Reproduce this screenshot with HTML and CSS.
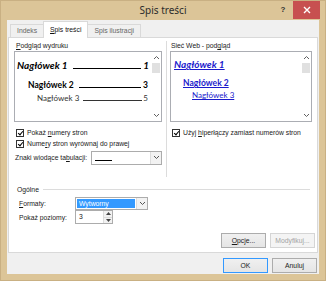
FILE: index.html
```html
<!DOCTYPE html>
<html lang="pl">
<head>
<meta charset="utf-8">
<title>Spis treści</title>
<link rel="stylesheet" href="styles.css">
</head>
<body>
<div class="window">
  <div class="titlebar">
    <div></div>
    <div class="title">Spis treści</div>
    <div class="controls">
      <div class="help">?</div>
      <div class="close">
        <svg width="8" height="8" viewBox="0 0 8 8"><path d="M1 1L7 7M7 1L1 7" stroke="#fff" stroke-width="1.4"/></svg>
      </div>
    </div>
  </div>
  <div class="client">
    <div class="tabs">
      <div class="tab">Indeks</div>
      <div class="tab active"><u>S</u>pis treści</div>
      <div class="tab">Spis ilustracji</div>
    </div>
    <div class="panel">
      <div class="top">
        <div class="col col-left">
          <div class="label"><u>P</u>odgląd wydruku</div>
          <div class="box">
            <div class="box-content print">
              <div class="entry h1"><span>Nagłówek 1</span><span class="leader"></span><span>1</span></div>
              <div class="entry h2"><span>Nagłówek 2</span><span class="leader"></span><span>3</span></div>
              <div class="entry h3"><span>Nagłówek 3</span><span class="leader"></span><span>5</span></div>
            </div>
            <div class="scrollbar">
              <svg class="arrow" width="7" height="5" viewBox="0 0 7 5"><path d="M1 4L3.5 1.5L6 4" fill="none" stroke="#606060" stroke-width="1"/></svg>
              <div class="thumb"></div>
              <div class="track"></div>
              <svg class="arrow" width="7" height="5" viewBox="0 0 7 5"><path d="M1 1L3.5 3.5L6 1" fill="none" stroke="#606060" stroke-width="1"/></svg>
            </div>
          </div>
          <div class="check-row"><span class="checkbox checked"></span><span>Pokaż <u>n</u>umery stron</span></div>
          <div class="check-row"><span class="checkbox checked"></span><span>Nume<u>r</u>y stron wyrównaj do prawej</span></div>
          <div class="field-row leaders">
            <span class="field-label">Znaki wiodące ta<u>b</u>ulacji:</span>
            <div class="select sel-leader">
              <div class="sel-value"><span class="underscore"></span></div>
              <div class="sel-btn"><svg width="7" height="5" viewBox="0 0 7 5"><path d="M1 1L3.5 3.5L6 1" fill="none" stroke="#555" stroke-width="1"/></svg></div>
            </div>
          </div>
        </div>
        <div class="col col-right">
          <div class="label">Sieć Web - pod<u>g</u>ląd</div>
          <div class="box">
            <div class="box-content web">
              <div class="link l1">Nagłówek 1</div>
              <div class="link l2">Nagłówek 2</div>
              <div class="link l3">Nagłówek 3</div>
            </div>
            <div class="scrollbar">
              <svg class="arrow" width="7" height="5" viewBox="0 0 7 5"><path d="M1 4L3.5 1.5L6 4" fill="none" stroke="#606060" stroke-width="1"/></svg>
              <div class="thumb"></div>
              <div class="track"></div>
              <svg class="arrow" width="7" height="5" viewBox="0 0 7 5"><path d="M1 1L3.5 3.5L6 1" fill="none" stroke="#606060" stroke-width="1"/></svg>
            </div>
          </div>
          <div class="check-row"><span class="checkbox checked"></span><span>Użyj <u>h</u>iperłączy zamiast numerów stron</span></div>
        </div>
      </div>
      <div class="general">
        <div class="group-title"><span>Ogólne</span><span class="group-line"></span></div>
        <div class="field-row gen-row first">
          <span class="gen-label"><u>F</u>ormaty:</span>
          <div class="select sel-format">
            <div class="sel-value"><span class="highlight">Wytworny</span></div>
            <div class="sel-btn"><svg width="7" height="5" viewBox="0 0 7 5"><path d="M1 1L3.5 3.5L6 1" fill="none" stroke="#555" stroke-width="1"/></svg></div>
          </div>
        </div>
        <div class="field-row gen-row">
          <span class="gen-label">Pokaż poziomy:</span>
          <div class="spin">
            <div class="spin-value">3</div>
            <div class="spin-btns">
              <div class="spin-btn"><svg width="5" height="3" viewBox="0 0 5 3"><path d="M0 3L2.5 0L5 3Z" fill="#444"/></svg></div>
              <div class="spin-btn"><svg width="5" height="3" viewBox="0 0 5 3"><path d="M0 0L2.5 3L5 0Z" fill="#444"/></svg></div>
            </div>
          </div>
        </div>
      </div>
      <div class="panel-buttons">
        <div class="btn"><u>O</u>pcje...</div>
        <div class="btn disabled">Modyfikuj...</div>
      </div>
    </div>
    <div class="footer">
      <div class="btn default">OK</div>
      <div class="btn">Anuluj</div>
    </div>
  </div>
</div>
</body>
</html>
```
FILE: styles.css
```css
* { box-sizing: border-box; }
body {
  margin: 0;
  width: 326px;
  height: 281px;
  overflow: hidden;
  background: #dcc598;
  font-family: "Liberation Sans", "Noto Sans", sans-serif;
  font-size: 6.8px;
  color: #1a1a1a;
}
u { text-decoration: underline; text-underline-offset: 1px; }
.window {
  height: 281px;
  display: flex;
  flex-direction: column;
  border: 1px solid #c9b083;
}
.titlebar {
  height: 19px;
  display: grid;
  grid-template-columns: 1fr auto 1fr;
}
.title {
  font-family: "Noto Sans", sans-serif;
  font-size: 10px;
  line-height: 18px;
  color: #2b2b2b;
}
.controls {
  justify-self: end;
  display: flex;
  margin-right: 5px;
}
.help {
  width: 16px;
  margin-right: 2px;
  text-align: center;
  font-size: 8px;
  font-weight: bold;
  line-height: 17px;
  color: #333;
}
.close {
  width: 27px;
  height: 18px;
  background: #c75050;
  display: flex;
  align-items: center;
  justify-content: center;
}
.client {
  flex: 1;
  margin: 0 6px 6px 6px;
  background: #f0f0f0;
  display: flex;
  flex-direction: column;
  padding: 0 0 0 1px;
}
.tabs {
  display: flex;
  align-items: flex-end;
  height: 17px;
  padding-left: 2px;
}
.tab {
  height: 13px;
  padding: 0 6px;
  line-height: 12px;
  border: 1px solid #d9d9d9;
  border-bottom: none;
  border-right: none;
  background: #f0f0f0;
  color: #666;
}
.tab:last-child { border-right: 1px solid #d9d9d9; }
.tab.active {
  height: 17px;
  line-height: 15px;
  background: #fff;
  color: #111;
  margin-bottom: -1px;
  border-right: 1px solid #d9d9d9;
  padding: 0 6px;
  position: relative;
  z-index: 1;
}
.tab.active + .tab { border-left: none; }
.panel {
  height: 216px;
  background: #fff;
  border: 1px solid #d9d9d9;
  display: flex;
  flex-direction: column;
  margin-right: 1px;
}
.top {
  height: 139px;
  display: grid;
  grid-template-columns: 157px 1fr;
  padding-top: 3px;
}
.col { display: flex; flex-direction: column; }
.col-left { padding: 0 4px 0 5px; }
.col-right { padding: 0 5px 0 3px; border-left: 1px solid #dcdcdc; }
.label {
  height: 10px;
  line-height: 9px;
  padding-left: 2px;
  color: #1a1a1a;
}
.col-right .label { padding-left: 1px; }
.box {
  height: 71px;
  border: 1px solid #abadb3;
  display: flex;
  margin-bottom: 5px;
}
.box-content { flex: 1; }
.scrollbar {
  width: 10px;
  display: flex;
  flex-direction: column;
  align-items: center;
  background: #fff;
  padding: 3px 0 3px;
}
.scrollbar .arrow { flex: none; }
.thumb {
  width: 8px;
  height: 10px;
  margin-top: 3px;
  background: #e0e0e0;
}
.track { flex: 1; }
.entry {
  display: flex;
  align-items: baseline;
  font-family: "Lato", "Open Sans", sans-serif;
  color: #000;
}
.leader {
  flex: 1;
  border-bottom: 1px solid #000;
  margin: 0 2px 0 5px;
}
.h1 {
  margin-top: 7px;
  font-size: 10px;
  font-weight: bold;
  font-style: italic;
  padding: 0 2px 0 2px;
}
.h2 {
  margin-top: 9px;
  font-size: 8.5px;
  font-weight: bold;
  padding: 0 3px 0 13px;
}
.h3 {
  margin-top: 3px;
  font-size: 8px;
  padding: 0 3px 0 22px;
  color: #333;
}
.h3 .leader { margin-left: 4px; margin-right: 1px; border-color: #333; }
.link {
  font-family: "Lato", "Open Sans", sans-serif;
  color: #1a1acc;
  text-decoration: underline;
  text-underline-offset: 1px;
}
.l1 { margin-top: 6px; padding-left: 3px; font-size: 10px; font-weight: bold; font-style: italic; }
.l2 { margin-top: 8px; padding-left: 12px; font-size: 8.5px; font-weight: bold; }
.l3 { margin-top: 2px; padding-left: 21px; font-size: 8px; }
.check-row {
  height: 11px;
  display: flex;
  align-items: center;
  gap: 3px;
  padding-left: 2px;
}
.checkbox {
  width: 8px;
  height: 8px;
  border: 1px solid #333;
  background: #fff;
  position: relative;
  flex: none;
}
.checkbox.checked::after {
  content: "";
  position: absolute;
  left: 2px;
  top: 0;
  width: 2px;
  height: 4px;
  border: solid #000;
  border-width: 0 1.5px 1.5px 0;
  transform: rotate(40deg);
}
.field-row {
  display: flex;
  align-items: center;
}
.leaders { height: 15px; margin-top: 1px; padding-left: 1px; }
.field-label { width: 76px; white-space: nowrap; }
.select {
  height: 14px;
  border: 1px solid #acacac;
  background: #fff;
  display: flex;
}
.sel-leader { width: 71px; }
.sel-value { flex: 1; display: flex; align-items: center; padding-left: 3px; }
.underscore { width: 17px; height: 1px; background: #000; margin-top: 6px; }
.sel-btn {
  width: 11px;
  display: flex;
  align-items: center;
  justify-content: center;
  border-left: 1px solid #dcdcdc;
  background: #f2f2f2;
}
.general { padding: 0 7px 0 8px; margin-top: 7px; }
.group-title {
  display: flex;
  align-items: center;
  height: 10px;
  color: #1a1a1a;
}
.group-line { flex: 1; height: 1px; background: #dcdcdc; margin-left: 4px; }
.gen-row { height: 14px; padding-left: 2px; }
.gen-row.first { margin-top: 2px; }
.gen-label { width: 56px; }
.sel-format { width: 73px; height: 13px; }
.sel-format .sel-value { padding: 1px; }
.highlight {
  display: block;
  width: 100%;
  height: 100%;
  background: #3399ff;
  color: #fff;
  line-height: 10px;
  padding-left: 2px;
}
.spin {
  width: 38px;
  height: 14px;
  border: 1px solid #acacac;
  background: #fff;
  display: flex;
}
.spin-value { flex: 1; padding-left: 3px; line-height: 12px; }
.spin-btns { width: 9px; display: flex; flex-direction: column; border-left: 1px solid #dcdcdc; }
.spin-btn { flex: 1; display: flex; align-items: center; justify-content: center; background: #f2f2f2; }
.spin-btn + .spin-btn { border-top: 1px solid #dcdcdc; }
.panel-buttons {
  margin-top: auto;
  display: flex;
  justify-content: flex-end;
  gap: 4px;
  padding: 0 2px 4px 0;
}
.btn {
  width: 45px;
  height: 15px;
  border: 1px solid #acacac;
  background: linear-gradient(#f0f0f0, #e5e5e5);
  display: flex;
  align-items: center;
  justify-content: center;
  color: #1a1a1a;
}
.btn.disabled { color: #a3a3a3; border-color: #d5d5d5; background: #f4f4f4; }
.btn.default { border-color: #3399ff; }
.footer {
  display: flex;
  justify-content: flex-end;
  gap: 4px;
  padding: 5px 2px 0 0;
}
```
